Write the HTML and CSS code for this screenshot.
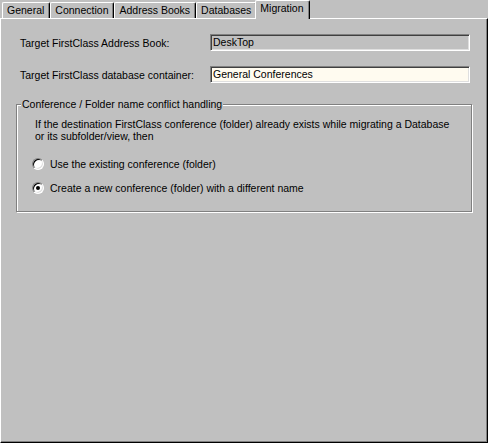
FILE: index.html
```html
<!DOCTYPE html>
<html>
<head>
<meta charset="utf-8">
<title>Migration</title>
<link rel="stylesheet" href="styles.css">
</head>
<body>
<div class="window">
  <div class="tabs">
    <div class="tab">General</div>
    <div class="tab">Connection</div>
    <div class="tab">Address Books</div>
    <div class="tab">Databases</div>
    <div class="tab active">Migration</div>
  </div>
  <div class="panel">
    <div class="form">
      <div class="label">Target FirstClass Address Book:</div>
      <div class="field disabled">DeskTop</div>
      <div class="label">Target FirstClass database container:</div>
      <div class="field">General Conferences</div>
    </div>
    <fieldset class="group">
      <legend class="legend">Conference / Folder name conflict handling</legend>
      <p class="desc">If the destination FirstClass conference (folder) already exists while migrating a Database<br>or its subfolder/view, then</p>
      <div class="radio-row"><span class="radio"></span><span>Use the existing conference (folder)</span></div>
      <div class="radio-row"><span class="radio checked"></span><span>Create a new conference (folder) with a different name</span></div>
    </fieldset>
  </div>
</div>
</body>
</html>
```

FILE: styles.css
```css
html, body {
  margin: 0;
  padding: 0;
}
body {
  background: #c0c0c0;
  color: #000;
  font: 10.5px "Liberation Sans", Arial, sans-serif;
}
.window {
  width: 488px;
  height: 443px;
  display: flex;
  flex-direction: column;
}
.tabs {
  display: flex;
  align-items: flex-end;
  height: 18px;
  padding-left: 2px;
  box-sizing: border-box;
}
.tab {
  height: 16px;
  box-sizing: border-box;
  border-top: 1px solid #fff;
  border-left: 1px solid #fff;
  border-right: 1px solid #000;
  box-shadow: inset -1px 0 0 #808080;
  border-radius: 2px 2px 0 0;
  padding: 1px 5px 0 4px;
  line-height: 13px;
  white-space: nowrap;
}
.tab.active {
  height: 19px;
  margin: 0 -2px -1px;
  position: relative;
  z-index: 1;
  background: #c0c0c0;
}
.panel {
  flex: 1;
  border-top: 1px solid #fff;
  border-left: 1px solid #fff;
  border-right: 1px solid #000;
  border-bottom: 1px solid #000;
  box-shadow: inset -1px -1px 0 #808080;
  padding: 15px 15px 0 15px;
}
.form {
  display: grid;
  grid-template-columns: 190px 260px;
  grid-auto-rows: 17px;
  row-gap: 15px;
  align-items: center;
  padding-left: 4px;
}
.field {
  height: 17px;
  box-sizing: border-box;
  border: 1px solid;
  border-color: #808080 #fff #fff #808080;
  box-shadow: inset 1px 1px 0 #404040, inset -1px -1px 0 #dfdfdf;
  background: #fffbf0;
  padding: 0 2px;
  line-height: 15px;
}
.field.disabled {
  background: #c0c0c0;
}
.group {
  margin: 15px 0 0;
  width: 456px;
  box-sizing: border-box;
  border: 1px solid #808080;
  box-shadow: 1px 1px 0 #fff, inset 1px 1px 0 #fff;
  padding: 7px 2px 11px 18px;
}
.legend {
  padding: 0 1px;
  margin-left: -14px;
  background: #c0c0c0;
  line-height: 13px;
}
.desc {
  margin: 0;
  line-height: 12px;
  white-space: nowrap;
}
.radio-row {
  display: flex;
  align-items: center;
  height: 24px;
  margin-left: -3px;
  gap: 6px;
}
.desc + .radio-row {
  margin-top: 10px;
}
.radio {
  width: 12px;
  height: 12px;
  box-sizing: border-box;
  border-radius: 50%;
  border: 1px solid;
  border-color: #808080 #fff #fff #808080;
  box-shadow: inset 1px 1px 0 #000, inset -1px -1px 0 #dfdfdf;
  background: #fff;
  display: flex;
  align-items: center;
  justify-content: center;
}
.radio.checked::after {
  content: "";
  width: 4px;
  height: 4px;
  border-radius: 50%;
  background: #000;
}
```
